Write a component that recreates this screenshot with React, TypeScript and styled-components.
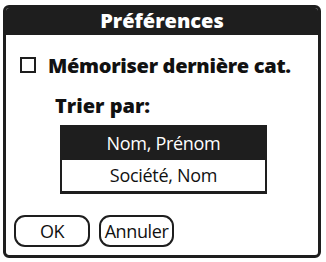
import React from "react";
import styled, { createGlobalStyle } from "styled-components";

const GlobalStyle = createGlobalStyle`
  body {
    margin: 0;
    background: #ffffff;
    font-family: "Open Sans", "DejaVu Sans", sans-serif;
  }
`;

const Dialog = styled.div`
  box-sizing: border-box;
  margin: 5px 0 0 3px;
  width: 318px;
  height: 253px;
  border: 3px solid #1e1e1e;
  border-radius: 6px;
  display: flex;
  flex-direction: column;
  background: #fff;
  overflow: hidden;
`;

const TitleBar = styled.div`
  height: 27px;
  background: #1e1e1e;
  color: #fff;
  font-weight: 800;
  font-size: 20px;
  line-height: 26px;
  text-align: center;
`;

const Body = styled.div`
  flex: 1;
  display: flex;
  flex-direction: column;
  padding: 17px 8px 8px 11px;
`;

const CheckRow = styled.label`
  display: flex;
  align-items: center;
  gap: 12px;
  height: 26px;
  font-weight: 800;
  font-size: 20px;
  letter-spacing: -0.3px;
  color: #111;
`;

const Box = styled.span`
  display: block;
  flex: 0 0 16px;
  box-sizing: border-box;
  width: 16px;
  height: 16px;
  margin-left: 3px;
  border: 2px solid #1e1e1e;
`;

const SortLabel = styled.div`
  margin: 15px 0 0 38px;
  font-weight: 800;
  font-size: 20px;
  line-height: 26px;
  color: #111;
`;

const List = styled.div`
  margin: 6px 0 0 43px;
  width: 207px;
  border: 2px solid #1e1e1e;
  border-bottom-width: 3px;
  box-sizing: border-box;
`;

const Item = styled.div<{ $selected?: boolean }>`
  height: ${(p) => (p.$selected ? 33 : 31)}px;
  line-height: ${(p) => (p.$selected ? 33 : 31)}px;
  text-align: center;
  font-size: 18px;
  letter-spacing: -0.3px;
  background: ${(p) => (p.$selected ? "#1e1e1e" : "#fff")};
  color: ${(p) => (p.$selected ? "#fff" : "#111")};
`;

const Buttons = styled.div`
  margin-top: auto;
  display: flex;
  gap: 9px;
  margin-left: -3px;
`;

const Button = styled.button<{ $wide?: boolean }>`
  box-sizing: border-box;
  width: ${(p) => (p.$wide ? 75 : 76)}px;
  height: 32px;
  border: 2px solid #1e1e1e;
  border-radius: 11px;
  background: #fff;
  font-family: inherit;
  font-size: 18px;
  letter-spacing: -0.4px;
  color: #111;
  padding: 0;
`;

export default function App() {
  return (
    <>
      <GlobalStyle />
      <Dialog>
        <TitleBar>Préférences</TitleBar>
        <Body>
          <CheckRow>
            <Box />
            Mémoriser dernière cat.
          </CheckRow>
          <SortLabel>Trier par:</SortLabel>
          <List>
            <Item $selected>Nom, Prénom</Item>
            <Item>Société, Nom</Item>
          </List>
          <Buttons>
            <Button>OK</Button>
            <Button $wide>Annuler</Button>
          </Buttons>
        </Body>
      </Dialog>
    </>
  );
}
